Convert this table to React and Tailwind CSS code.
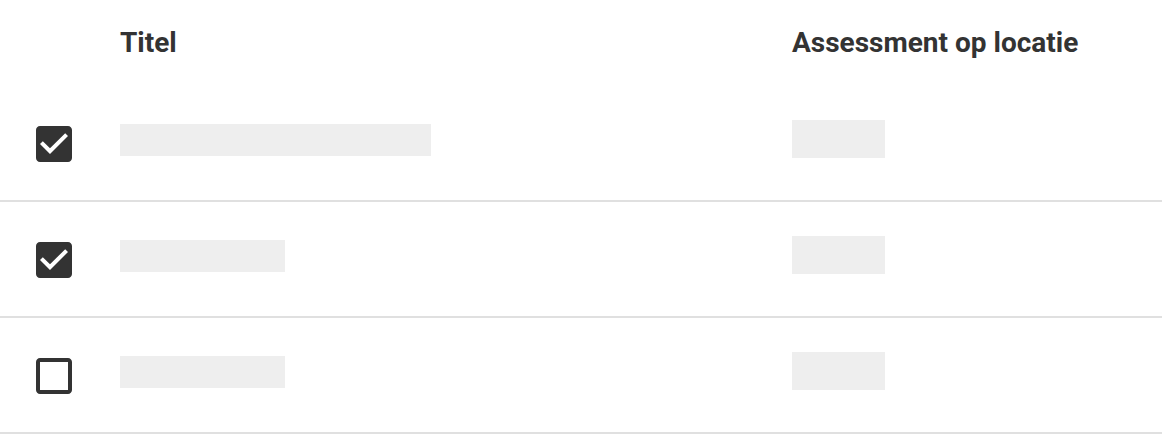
import React from 'react';

const rows = [
  { checked: true, titleWidth: 'w-[311px]' },
  { checked: true, titleWidth: 'w-[165px]' },
  { checked: false, titleWidth: 'w-[165px]' },
];

function CheckIcon({ checked }) {
  return (
    <svg width="48" height="48" viewBox="0 0 24 24" className="fill-[#333333]">
      {checked ? (
        <path d="M19 3H5c-1.11 0-2 .9-2 2v14c0 1.1.89 2 2 2h14c1.11 0 2-.9 2-2V5c0-1.1-.89-2-2-2zm-9 14l-5-5 1.41-1.41L10 14.17l7.59-7.59L19 8l-9 9z" />
      ) : (
        <path d="M19 5v14H5V5h14m0-2H5c-1.1 0-2 .9-2 2v14c0 1.1.9 2 2 2h14c1.1 0 2-.9 2-2V5c0-1.1-.9-2-2-2z" />
      )}
    </svg>
  );
}

export default function App() {
  return (
    <div className="w-[1162px] h-[438px] bg-white text-[#333333] font-['Roboto',sans-serif] overflow-hidden">
      {/* header */}
      <div className="grid grid-cols-[120px_672px_1fr] h-[86px] items-center">
        <div />
        <div className="text-[28px] font-bold">Titel</div>
        <div className="text-[28px] font-bold">Assessment op locatie</div>
      </div>

      {rows.map((row, i) => (
        <div key={i} className="grid grid-cols-[120px_672px_1fr] h-[116px] items-center border-b-2 border-[#e0e0e0]">
          <div className="pl-[30px] pt-[2px] flex items-center">
            <CheckIcon checked={row.checked} />
          </div>
          <div className="pb-[6px]">
            <div className={`${row.titleWidth} h-8 bg-[#eeeeee]`} />
          </div>
          <div className="pb-2">
            <div className="w-[93px] h-[38px] bg-[#eeeeee]" />
          </div>
        </div>
      ))}
    </div>
  );
}
